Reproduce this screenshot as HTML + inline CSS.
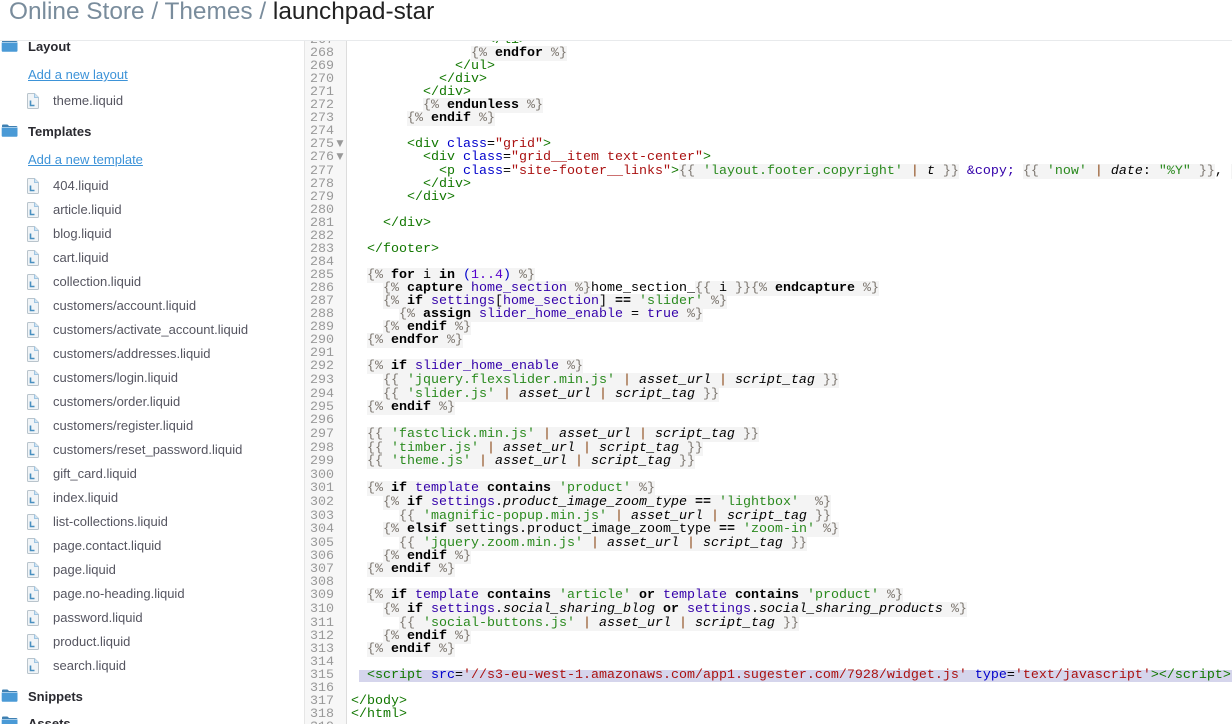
<!DOCTYPE html>
<html><head><meta charset="utf-8"><style>
html,body{margin:0;padding:0;width:1232px;height:724px;overflow:hidden;background:#fff}
#hd{position:absolute;left:0;top:0;width:1232px;height:40px;background:#fff;border-bottom:1px solid #e8eaec;z-index:5;overflow:hidden;font:24.4px/24px "Liberation Sans",sans-serif;color:#798c9c}
#hd span{position:absolute;left:9px;top:0;white-space:pre}
#hd b{font-weight:normal;color:#222}
#sb{position:absolute;left:0;top:0;width:304px;height:724px;border-right:1px solid #e6e6e6;overflow:hidden;font:13px/16px "Liberation Sans",sans-serif;color:#555560}
#sb div{position:absolute;white-space:pre;margin-top:1px}
#sb .h{left:28px;font-weight:bold;color:#2a2a30}
#sb .a{left:28px;color:#3d93d8;text-decoration:underline}
#sb .r{left:53px}
#sb svg{position:absolute}
#sb svg.c{margin-top:1px}
#gt{position:absolute;left:305px;top:0;width:41px;height:724px;background:#f7f7f7;border-right:1px solid #ddd}
#cd{position:absolute;left:0;top:1px;width:1232px;height:723px;overflow:hidden;font:13.333px/13px "Liberation Mono",monospace;color:#000}
#cd p{position:absolute;margin:0;left:351px;white-space:pre;height:13px}
#cd i.n{position:absolute;font-style:normal;left:305px;width:29px;text-align:right;color:#999;height:13px}
#cd .m{position:absolute;left:336px;width:8px;text-align:center;color:#999;font:9px/13px "DejaVu Sans",sans-serif}
.l{background:#f4f4f4}
.d{color:#7d7770}
.k{font-weight:bold;color:#000}
.t{color:#170}
.a{color:#00c}
.s{color:#a11}
.q{color:#2a8a1e}
.v{color:#30a}
.p{color:#8a4512}
.u{color:#50c}
.f{font-style:italic}
#hl{position:absolute;left:359px;top:670px;width:873px;height:12px;background:#d5d5ec}
</style></head><body>
<div id="hd"><span>Online Store / Themes / <b>launchpad-star</b></span></div>
<svg width="0" height="0" style="position:absolute"><defs>
<symbol id="fo" viewBox="0 0 17 13"><path d="M1 3V1.5Q1 .5 2 .5H6Q7 .5 7.5 1.5L8 2H15Q16.5 2 16.5 3.5V3Z" fill="#3f80b2"/><path d="M.7 3.5H16.5V11.5Q16.5 12.8 15 12.8H2Q.7 12.8 .7 11.5Z" fill="#4a9ad6"/></symbol>
<symbol id="fi" viewBox="0 0 12 16"><path d="M.5 1.5Q.5 .5 1.5 .5H7.5L11.5 4.5V14.5Q11.5 15.5 10.5 15.5H1.5Q.5 15.5 .5 14.5Z" fill="#f0f4f7" stroke="#b9c4cc"/><path d="M7.5 .5V4.5H11.5" fill="#cfe3f2" stroke="#9fc5e2"/><path d="M3.5 7.5V12.5H7.5" fill="none" stroke="#4a90c0" stroke-width="1.6"/></symbol>
</defs></svg>
<div id="sb">
<svg style="left:1px;top:39px" width="17" height="13"><use href="#fo"/></svg><div class="h" style="top:38px">Layout</div>
<div class="a" style="top:66px">Add a new layout</div>
<svg class="c" style="left:27px;top:92px" width="12" height="16"><use href="#fi"/></svg><div class="r" style="top:92px">theme.liquid</div>
<svg style="left:1px;top:124px" width="17" height="13"><use href="#fo"/></svg><div class="h" style="top:123px">Templates</div>
<div class="a" style="top:151px">Add a new template</div>
<svg class="c" style="left:27px;top:177px" width="12" height="16"><use href="#fi"/></svg><div class="r" style="top:177px">404.liquid</div>
<svg class="c" style="left:27px;top:201px" width="12" height="16"><use href="#fi"/></svg><div class="r" style="top:201px">article.liquid</div>
<svg class="c" style="left:27px;top:225px" width="12" height="16"><use href="#fi"/></svg><div class="r" style="top:225px">blog.liquid</div>
<svg class="c" style="left:27px;top:249px" width="12" height="16"><use href="#fi"/></svg><div class="r" style="top:249px">cart.liquid</div>
<svg class="c" style="left:27px;top:273px" width="12" height="16"><use href="#fi"/></svg><div class="r" style="top:273px">collection.liquid</div>
<svg class="c" style="left:27px;top:297px" width="12" height="16"><use href="#fi"/></svg><div class="r" style="top:297px">customers/account.liquid</div>
<svg class="c" style="left:27px;top:321px" width="12" height="16"><use href="#fi"/></svg><div class="r" style="top:321px">customers/activate_account.liquid</div>
<svg class="c" style="left:27px;top:345px" width="12" height="16"><use href="#fi"/></svg><div class="r" style="top:345px">customers/addresses.liquid</div>
<svg class="c" style="left:27px;top:369px" width="12" height="16"><use href="#fi"/></svg><div class="r" style="top:369px">customers/login.liquid</div>
<svg class="c" style="left:27px;top:393px" width="12" height="16"><use href="#fi"/></svg><div class="r" style="top:393px">customers/order.liquid</div>
<svg class="c" style="left:27px;top:417px" width="12" height="16"><use href="#fi"/></svg><div class="r" style="top:417px">customers/register.liquid</div>
<svg class="c" style="left:27px;top:441px" width="12" height="16"><use href="#fi"/></svg><div class="r" style="top:441px">customers/reset_password.liquid</div>
<svg class="c" style="left:27px;top:465px" width="12" height="16"><use href="#fi"/></svg><div class="r" style="top:465px">gift_card.liquid</div>
<svg class="c" style="left:27px;top:489px" width="12" height="16"><use href="#fi"/></svg><div class="r" style="top:489px">index.liquid</div>
<svg class="c" style="left:27px;top:513px" width="12" height="16"><use href="#fi"/></svg><div class="r" style="top:513px">list-collections.liquid</div>
<svg class="c" style="left:27px;top:537px" width="12" height="16"><use href="#fi"/></svg><div class="r" style="top:537px">page.contact.liquid</div>
<svg class="c" style="left:27px;top:561px" width="12" height="16"><use href="#fi"/></svg><div class="r" style="top:561px">page.liquid</div>
<svg class="c" style="left:27px;top:585px" width="12" height="16"><use href="#fi"/></svg><div class="r" style="top:585px">page.no-heading.liquid</div>
<svg class="c" style="left:27px;top:609px" width="12" height="16"><use href="#fi"/></svg><div class="r" style="top:609px">password.liquid</div>
<svg class="c" style="left:27px;top:633px" width="12" height="16"><use href="#fi"/></svg><div class="r" style="top:633px">product.liquid</div>
<svg class="c" style="left:27px;top:657px" width="12" height="16"><use href="#fi"/></svg><div class="r" style="top:657px">search.liquid</div>
<svg style="left:1px;top:689px" width="17" height="13"><use href="#fo"/></svg><div class="h" style="top:688px">Snippets</div>
<svg style="left:1px;top:716px" width="17" height="13"><use href="#fo"/></svg><div class="h" style="top:715px">Assets</div>
</div>
<div id="gt"></div>
<div id="hl"></div>
<div id="cd">
<i class="n" style="top:33px">267</i><p style="top:33px">                 <span class="t">&lt;/li&gt;</span></p>
<i class="n" style="top:46px">268</i><p style="top:46px">               <span class="l"><span class="d">{%</span> <span class="k">endfor</span> <span class="d">%}</span></span></p>
<i class="n" style="top:59px">269</i><p style="top:59px">             <span class="t">&lt;/ul&gt;</span></p>
<i class="n" style="top:72px">270</i><p style="top:72px">           <span class="t">&lt;/div&gt;</span></p>
<i class="n" style="top:85px">271</i><p style="top:85px">         <span class="t">&lt;/div&gt;</span></p>
<i class="n" style="top:98px">272</i><p style="top:98px">         <span class="l"><span class="d">{%</span> <span class="k">endunless</span> <span class="d">%}</span></span></p>
<i class="n" style="top:111px">273</i><p style="top:111px">       <span class="l"><span class="d">{%</span> <span class="k">endif</span> <span class="d">%}</span></span></p>
<i class="n" style="top:124px">274</i>
<i class="n" style="top:137px">275</i><span class="m" style="top:137px">▼</span><p style="top:137px">       <span class="t">&lt;div</span> <span class="a">class</span>=<span class="s">"grid"</span><span class="t">&gt;</span></p>
<i class="n" style="top:150px">276</i><span class="m" style="top:150px">▼</span><p style="top:150px">         <span class="t">&lt;div</span> <span class="a">class</span>=<span class="s">"grid__item text-center"</span><span class="t">&gt;</span></p>
<i class="n" style="top:164px">277</i><p style="top:164px">           <span class="t">&lt;p</span> <span class="a">class</span>=<span class="s">"site-footer__links"</span><span class="t">&gt;</span><span class="l"><span class="d">{{</span> <span class="q">'layout.footer.copyright'</span> <span class="p">|</span> <span class="f">t</span> <span class="d">}}</span></span> <span class="v">&amp;copy;</span> <span class="l"><span class="d">{{</span> <span class="q">'now'</span> <span class="p">|</span> <span class="f">date</span>: <span class="q">"%Y"</span> <span class="d">}}</span></span>, <span class="l"> </span></p>
<i class="n" style="top:177px">278</i><p style="top:177px">         <span class="t">&lt;/div&gt;</span></p>
<i class="n" style="top:190px">279</i><p style="top:190px">       <span class="t">&lt;/div&gt;</span></p>
<i class="n" style="top:203px">280</i>
<i class="n" style="top:216px">281</i><p style="top:216px">    <span class="t">&lt;/div&gt;</span></p>
<i class="n" style="top:229px">282</i>
<i class="n" style="top:242px">283</i><p style="top:242px">  <span class="t">&lt;/footer&gt;</span></p>
<i class="n" style="top:255px">284</i>
<i class="n" style="top:268px">285</i><p style="top:268px">  <span class="l"><span class="d">{%</span> <span class="k">for</span> i <span class="k">in</span> <span class="a">(</span><span class="u">1..4</span><span class="a">)</span> <span class="d">%}</span></span></p>
<i class="n" style="top:281px">286</i><p style="top:281px">    <span class="l"><span class="d">{%</span> <span class="k">capture</span> <span class="v">home_section</span> <span class="d">%}</span></span>home_section_<span class="l"><span class="d">{{</span> i <span class="d">}}</span></span><span class="l"><span class="d">{%</span> <span class="k">endcapture</span> <span class="d">%}</span></span></p>
<i class="n" style="top:294px">287</i><p style="top:294px">    <span class="l"><span class="d">{%</span> <span class="k">if</span> <span class="v">settings</span>[<span class="v">home_section</span>] <span class="k">==</span> <span class="q">'slider'</span> <span class="d">%}</span></span></p>
<i class="n" style="top:307px">288</i><p style="top:307px">      <span class="l"><span class="d">{%</span> <span class="k">assign</span> <span class="v">slider_home_enable</span> = <span class="v">true</span> <span class="d">%}</span></span></p>
<i class="n" style="top:320px">289</i><p style="top:320px">    <span class="l"><span class="d">{%</span> <span class="k">endif</span> <span class="d">%}</span></span></p>
<i class="n" style="top:333px">290</i><p style="top:333px">  <span class="l"><span class="d">{%</span> <span class="k">endfor</span> <span class="d">%}</span></span></p>
<i class="n" style="top:346px">291</i>
<i class="n" style="top:359px">292</i><p style="top:359px">  <span class="l"><span class="d">{%</span> <span class="k">if</span> <span class="v">slider_home_enable</span> <span class="d">%}</span></span></p>
<i class="n" style="top:373px">293</i><p style="top:373px">    <span class="l"><span class="d">{{</span> <span class="q">'jquery.flexslider.min.js'</span> <span class="p">|</span> <span class="f">asset_url</span> <span class="p">|</span> <span class="f">script_tag</span> <span class="d">}}</span></span></p>
<i class="n" style="top:387px">294</i><p style="top:387px">    <span class="l"><span class="d">{{</span> <span class="q">'slider.js'</span> <span class="p">|</span> <span class="f">asset_url</span> <span class="p">|</span> <span class="f">script_tag</span> <span class="d">}}</span></span></p>
<i class="n" style="top:400px">295</i><p style="top:400px">  <span class="l"><span class="d">{%</span> <span class="k">endif</span> <span class="d">%}</span></span></p>
<i class="n" style="top:413px">296</i>
<i class="n" style="top:427px">297</i><p style="top:427px">  <span class="l"><span class="d">{{</span> <span class="q">'fastclick.min.js'</span> <span class="p">|</span> <span class="f">asset_url</span> <span class="p">|</span> <span class="f">script_tag</span> <span class="d">}}</span></span></p>
<i class="n" style="top:441px">298</i><p style="top:441px">  <span class="l"><span class="d">{{</span> <span class="q">'timber.js'</span> <span class="p">|</span> <span class="f">asset_url</span> <span class="p">|</span> <span class="f">script_tag</span> <span class="d">}}</span></span></p>
<i class="n" style="top:454px">299</i><p style="top:454px">  <span class="l"><span class="d">{{</span> <span class="q">'theme.js'</span> <span class="p">|</span> <span class="f">asset_url</span> <span class="p">|</span> <span class="f">script_tag</span> <span class="d">}}</span></span></p>
<i class="n" style="top:468px">300</i>
<i class="n" style="top:481px">301</i><p style="top:481px">  <span class="l"><span class="d">{%</span> <span class="k">if</span> <span class="v">template</span> <span class="k">contains</span> <span class="q">'product'</span> <span class="d">%}</span></span></p>
<i class="n" style="top:495px">302</i><p style="top:495px">    <span class="l"><span class="d">{%</span> <span class="k">if</span> <span class="v">settings</span>.<span class="f">product_image_zoom_type</span> <span class="k">==</span> <span class="q">'lightbox'</span>  <span class="d">%}</span></span></p>
<i class="n" style="top:509px">303</i><p style="top:509px">      <span class="l"><span class="d">{{</span> <span class="q">'magnific-popup.min.js'</span> <span class="p">|</span> <span class="f">asset_url</span> <span class="p">|</span> <span class="f">script_tag</span> <span class="d">}}</span></span></p>
<i class="n" style="top:522px">304</i><p style="top:522px">    <span class="l"><span class="d">{%</span> <span class="k">elsif</span> settings.product_image_zoom_type <span class="k">==</span> <span class="q">'zoom-in'</span> <span class="d">%}</span></span></p>
<i class="n" style="top:536px">305</i><p style="top:536px">      <span class="l"><span class="d">{{</span> <span class="q">'jquery.zoom.min.js'</span> <span class="p">|</span> <span class="f">asset_url</span> <span class="p">|</span> <span class="f">script_tag</span> <span class="d">}}</span></span></p>
<i class="n" style="top:549px">306</i><p style="top:549px">    <span class="l"><span class="d">{%</span> <span class="k">endif</span> <span class="d">%}</span></span></p>
<i class="n" style="top:562px">307</i><p style="top:562px">  <span class="l"><span class="d">{%</span> <span class="k">endif</span> <span class="d">%}</span></span></p>
<i class="n" style="top:575px">308</i>
<i class="n" style="top:588px">309</i><p style="top:588px">  <span class="l"><span class="d">{%</span> <span class="k">if</span> <span class="v">template</span> <span class="k">contains</span> <span class="q">'article'</span> <span class="k">or</span> <span class="v">template</span> <span class="k">contains</span> <span class="q">'product'</span> <span class="d">%}</span></span></p>
<i class="n" style="top:602px">310</i><p style="top:602px">    <span class="l"><span class="d">{%</span> <span class="k">if</span> <span class="v">settings</span>.<span class="f">social_sharing_blog</span> <span class="k">or</span> <span class="v">settings</span>.<span class="f">social_sharing_products</span> <span class="d">%}</span></span></p>
<i class="n" style="top:616px">311</i><p style="top:616px">      <span class="l"><span class="d">{{</span> <span class="q">'social-buttons.js'</span> <span class="p">|</span> <span class="f">asset_url</span> <span class="p">|</span> <span class="f">script_tag</span> <span class="d">}}</span></span></p>
<i class="n" style="top:629px">312</i><p style="top:629px">    <span class="l"><span class="d">{%</span> <span class="k">endif</span> <span class="d">%}</span></span></p>
<i class="n" style="top:642px">313</i><p style="top:642px">  <span class="l"><span class="d">{%</span> <span class="k">endif</span> <span class="d">%}</span></span></p>
<i class="n" style="top:655px">314</i>
<i class="n" style="top:668px">315</i><p style="top:668px">  <span class="t">&lt;script</span> <span class="a">src</span>=<span class="s">'//s3-eu-west-1.amazonaws.com/app1.sugester.com/7928/widget.js'</span> <span class="a">type</span>=<span class="s">'text/javascript'</span><span class="t">&gt;&lt;/script&gt;</span></p>
<i class="n" style="top:681px">316</i>
<i class="n" style="top:694px">317</i><p style="top:694px"><span class="t">&lt;/body&gt;</span></p>
<i class="n" style="top:707px">318</i><p style="top:707px"><span class="t">&lt;/html&gt;</span></p>
<i class="n" style="top:720px">319</i>
</div>
</body></html>
